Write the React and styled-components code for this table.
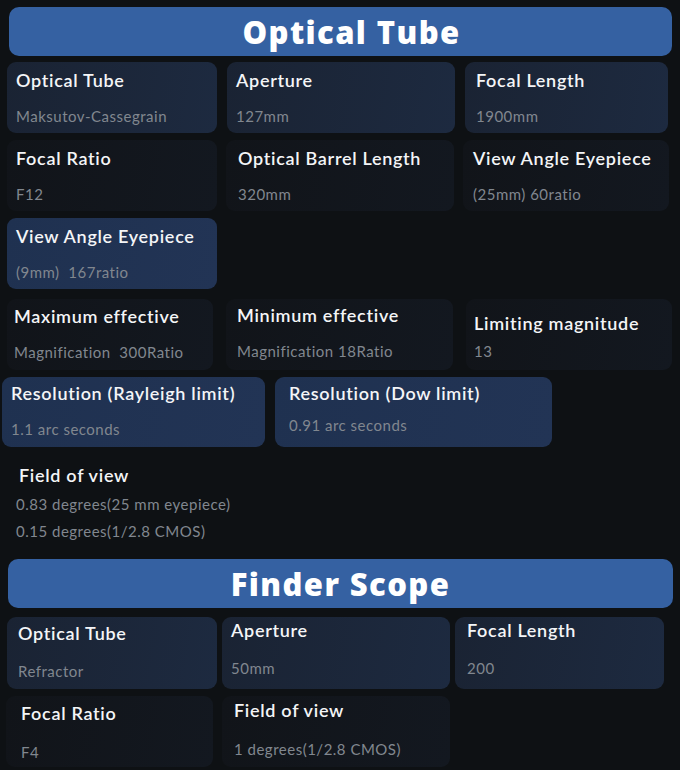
import styled, { createGlobalStyle } from "styled-components";

const GlobalStyle = createGlobalStyle`
  html, body {
    margin: 0;
    padding: 0;
    background: #0e1114;
  }
  body {
    font-family: "Lato", "Noto Sans", sans-serif;
  }
`;

const Page = styled.div`
  width: 680px;
  height: 770px;
  background: #0e1114;
  padding-top: 7px;
  box-sizing: border-box;
  display: flex;
  flex-direction: column;
  overflow: hidden;
`;

const Header = styled.div`
  margin: ${(p) => p.$m || "0 8px 0 9px"};
  padding-left: ${(p) => p.$shift || 0}px;
  height: 49px;
  border-radius: 10px;
  background: #3561a2;
  color: #ffffff;
  display: flex;
  align-items: center;
  justify-content: center;
  font-family: "Open Sans", "Lato", sans-serif;
  font-weight: 800;
  font-size: 31px;
  letter-spacing: 1.4px;
`;

const Row = styled.div`
  display: flex;
  gap: ${(p) => p.$gap || 9}px;
  padding-left: ${(p) => p.$pl || 7}px;
  margin-top: ${(p) => p.$mt || 7}px;
  height: ${(p) => p.$h || 71}px;
`;

const tones = {
  navy: "linear-gradient(100deg, #1a2333 0%, #1d2a40 100%)",
  blue: "linear-gradient(100deg, #1f3150 0%, #223455 100%)",
  dark: "linear-gradient(100deg, #111419 0%, #131820 100%)",
  none: "transparent",
};

const Card = styled.div`
  width: ${(p) => p.$w}px;
  flex: none;
  box-sizing: border-box;
  border-radius: 9px;
  background: ${(p) => tones[p.$tone || "navy"]};
  padding: ${(p) => p.$pt || 7}px 6px 0 ${(p) => p.$pl || 9}px;
  display: flex;
  flex-direction: column;
  gap: ${(p) => p.$gap || 16}px;
`;

const Title = styled.div`
  color: #f4f5f7;
  font-size: 18px;
  font-weight: 600;
  line-height: 22px;
  letter-spacing: 0.7px;
  white-space: nowrap;
`;

const Value = styled.div`
  color: #81878f;
  font-size: 15px;
  line-height: 18px;
  letter-spacing: 0.5px;
  white-space: pre;
`;

const FieldBlock = styled.div`
  padding: 17px 0 0 16px;
  height: 100px;
  box-sizing: border-box;
  display: flex;
  flex-direction: column;
`;

const FieldTitle = styled(Title)`
  padding-left: 3px;
  margin-bottom: 9px;
`;

const FieldValue = styled(Value)`
  margin-bottom: 9px;
`;

const Item = ({ title, value, ...rest }) => (
  <Card {...rest}>
    <Title>{title}</Title>
    <Value>{value}</Value>
  </Card>
);

export default function App() {
  return (
    <Page>
      <GlobalStyle />
      <Header $shift={22}>Optical Tube</Header>

      <Row $mt={6} $gap={10}>
        <Item $w={210} title="Optical Tube" value="Maksutov-Cassegrain" />
        <Item $w={228} title="Aperture" value="127mm" />
        <Item $w={203} $pl={11} title="Focal Length" value="1900mm" />
      </Row>

      <Row $gap={9}>
        <Item $w={210} $tone="dark" title="Focal Ratio" value="F12" />
        <Item $w={228} $tone="dark" $pl={12} title="Optical Barrel Length" value="320mm" />
        <Item $w={206} $tone="dark" $pl={10} title="View Angle Eyepiece" value="(25mm) 60ratio" />
      </Row>

      <Row>
        <Item $w={210} $tone="blue" title="View Angle Eyepiece" value="(9mm)  167ratio" />
      </Row>

      <Row $mt={10} $gap={13}>
        <Item $w={206} $tone="dark" $pl={7} $pt={6} title="Maximum effective" value="Magnification  300Ratio" />
        <Item $w={227} $tone="dark" $pl={11} $pt={5} title="Minimum effective" value="Magnification 18Ratio" />
        <Item $w={206} $tone="dark" $pl={8} $pt={13} $gap={8} title="Limiting magnitude" value="13" />
      </Row>

      <Row $pl={2} $gap={10} $mt={7} $h={70}>
        <Item $w={263} $tone="blue" $pt={5} title="Resolution (Rayleigh limit)" value="1.1 arc seconds" />
        <Item $w={277} $tone="blue" $pl={14} $pt={5} $gap={12} title="Resolution (Dow limit)" value="0.91 arc seconds" />
      </Row>

      <FieldBlock>
        <FieldTitle>Field of view</FieldTitle>
        <FieldValue>0.83 degrees(25 mm eyepiece)</FieldValue>
        <FieldValue>0.15 degrees(1/2.8 CMOS)</FieldValue>
      </FieldBlock>

      <Header $m="12px 7px 0 8px">Finder Scope</Header>

      <Row $mt={9} $gap={5} $h={72}>
        <Item $w={210} $pl={11} $pt={5} $gap={18} title="Optical Tube" value="Refractor" />
        <Item $w={228} $pl={9} $pt={2} $gap={18} title="Aperture" value="50mm" />
        <Item $w={209} $pl={12} $pt={2} $gap={18} title="Focal Length" value="200" />
      </Row>

      <Row $mt={7} $gap={9} $pl={6}>
        <Item $w={207} $tone="dark" $pl={15} $pt={6} $gap={19} title="Focal Ratio" value="F4" />
        <Item $w={228} $tone="dark" $pl={12} $pt={3} $gap={19} title="Field of view" value="1 degrees(1/2.8 CMOS)" />
      </Row>
    </Page>
  );
}
